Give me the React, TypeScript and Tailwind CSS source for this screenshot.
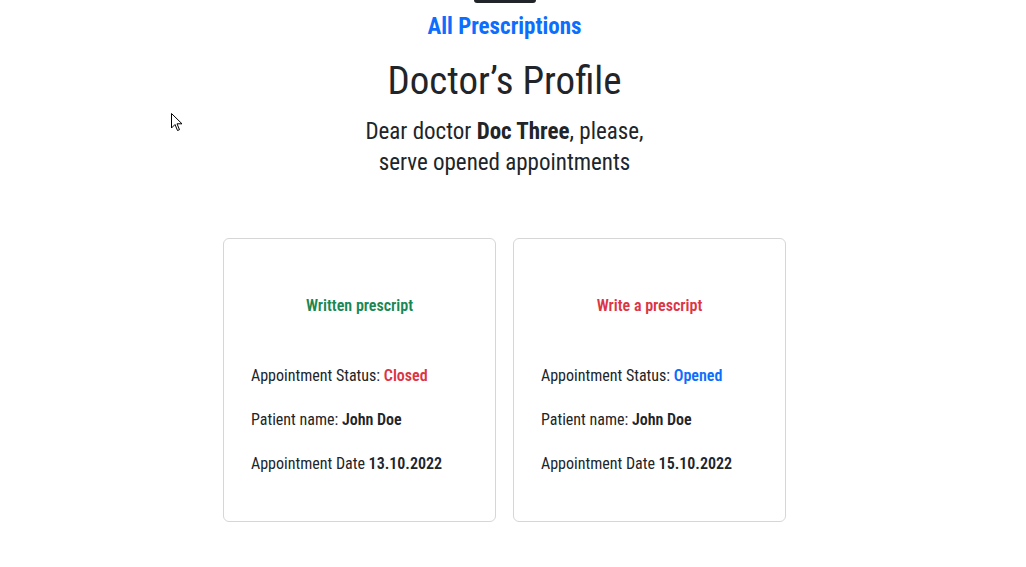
import React from "react";

function Card({ title, titleColor, status, statusColor, date }: { title: string; titleColor: string; status: string; statusColor: string; date: string }) {
  return (
    <div className="w-[273px] h-[284px] border border-[#d6d6d6] rounded-[6px] bg-white flex flex-col px-[27px]">
      <div className={`mt-[55px] text-center text-[16px] leading-[24px] font-semibold ${titleColor}`}>{title}</div>
      <div className="mt-[46px] flex flex-col gap-[20px] text-[16px] text-[#212529]">
        <div className="h-[24px] leading-[24px]">Appointment Status: <span className={`font-semibold ${statusColor}`}>{status}</span></div>
        <div className="h-[24px] leading-[24px]">Patient name: <span className="font-semibold">John Doe</span></div>
        <div className="h-[24px] leading-[24px]">Appointment Date <span className="font-semibold">{date}</span></div>
      </div>
    </div>
  );
}

export default function App() {
  return (
    <div className="relative w-[1026px] h-[567px] bg-white overflow-hidden font-['Roboto',sans-serif] font-stretch-condensed">
      <div className="w-[1009px] flex flex-col items-center">
        <div className="w-[62px] h-[3px] bg-[#212529] rounded-b-[4px]" />
        <div className="mt-[9px] text-[23px] leading-[30px] font-bold text-[#0d6efd]">All Prescriptions</div>
        <h1 className="mt-[14px] text-[39px] leading-[50px] text-[#212529]">Doctor’s Profile</h1>
        <p className="mt-[10px] text-[23px] leading-[31px] text-[#212529] text-center">
          Dear doctor <b>Doc Three</b>, please,<br />serve opened appointments
        </p>
        <div className="mt-[60px] flex gap-[17px]">
          <Card title="Written prescript" titleColor="text-[#198754]" status="Closed" statusColor="text-[#dc3545]" date="13.10.2022" />
          <Card title="Write a prescript" titleColor="text-[#dc3545]" status="Opened" statusColor="text-[#0d6efd]" date="15.10.2022" />
        </div>
      </div>
      <svg className="absolute left-[171px] top-[113px]" width="12" height="20" viewBox="0 0 12 20">
        <path d="M0.5 0.5 L0.5 15 L4 11.5 L6.5 17.5 L8.5 16.7 L6 10.8 L11 10.8 Z" fill="white" stroke="black" strokeWidth="1" />
      </svg>
    </div>
  );
}
